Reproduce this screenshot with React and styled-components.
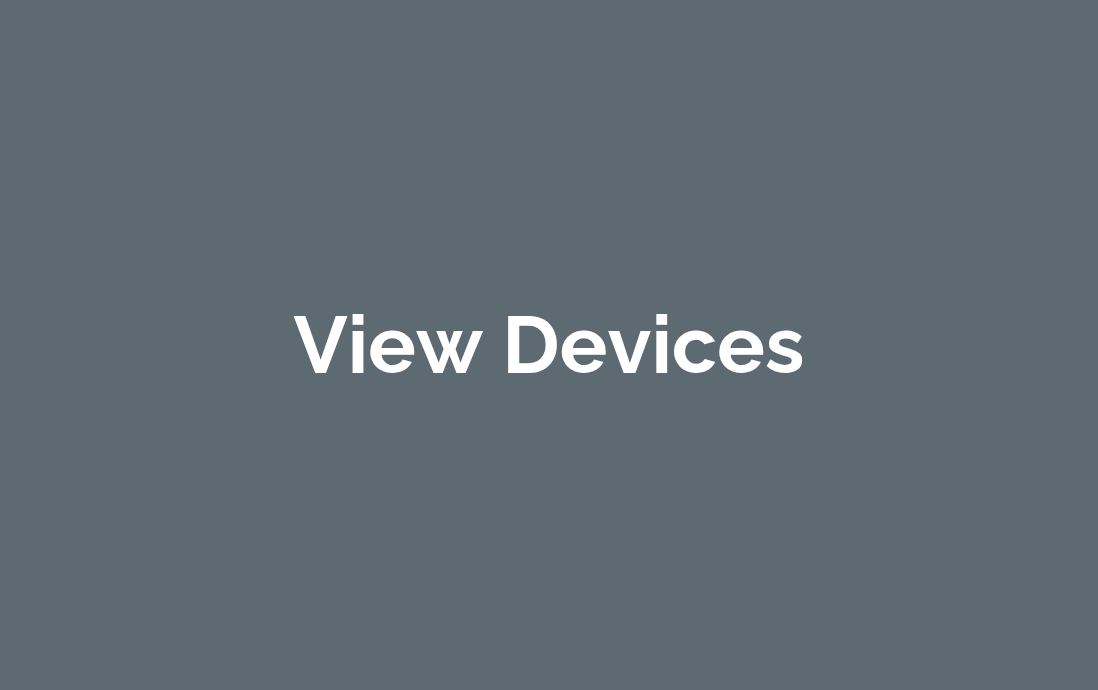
import React from "react"
import styled, { createGlobalStyle } from "styled-components"

export default function App() {
  return (
    <>
      <GlobalStyle />
      <Wrapper>
        <Title>View Devices</Title>
      </Wrapper>
    </>
  )
}

const GlobalStyle = createGlobalStyle`
  body {
    margin: 0;
    background-color: #5e6a71;
  }
`

const Wrapper = styled.main`
  display: flex;
  justify-content: center;
  align-items: center;
  min-height: 100vh;
`

const Title = styled.h1`
  margin: 0;
  color: #fff;
  font-family: Raleway, "Open Sans", sans-serif;
  font-size: 80px;
  font-weight: 700;
  font-kerning: none;
  line-height: 96px;
  text-align: center;
`
